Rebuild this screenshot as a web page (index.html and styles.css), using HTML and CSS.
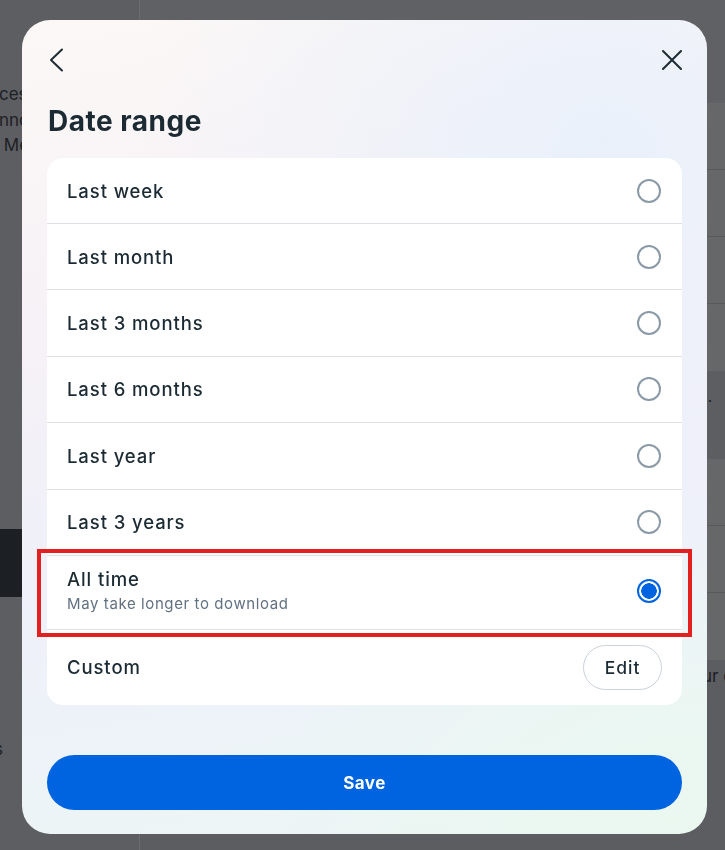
FILE: index.html
```html
<!DOCTYPE html>
<html lang="en">
<head>
<meta charset="utf-8">
<title>Date range</title>
<link rel="stylesheet" href="styles.css">
</head>
<body>
<div class="page">
  <nav class="sidebar">
    <div class="side-text">
      <p class="side-line">ces</p>
      <p class="side-line">nnc</p>
      <p class="side-line">&nbsp;Me</p>
    </div>
    <div class="side-active"></div>
    <p class="side-tail">s</p>
  </nav>
  <main class="main">
    <div class="topbar"></div>
    <div class="list">
      <div class="list-row"></div>
      <div class="list-row"></div>
      <div class="list-row"></div>
      <div class="list-row last"></div>
    </div>
    <div class="notice"><span>s.</span></div>
    <div class="list">
      <div class="list-row"></div>
      <div class="list-row"></div>
      <div class="list-row last"></div>
    </div>
    <div class="footer-note"><span>ur c</span></div>
  </main>
</div>

<div class="modal" role="dialog" aria-label="Date range">
  <div class="modal-head">
    <button class="icon-btn" aria-label="Back">
      <svg width="24" height="24" viewBox="0 0 24 24"><path d="M15 1.5 L4 12 L15 22.5" fill="none" stroke="#1c2b33" stroke-width="2" stroke-linecap="round" stroke-linejoin="round"/></svg>
    </button>
    <button class="icon-btn" aria-label="Close">
      <svg width="24" height="24" viewBox="0 0 24 24"><path d="M5 3 L23 21 M23 3 L5 21" fill="none" stroke="#1c2b33" stroke-width="2" stroke-linecap="round"/></svg>
    </button>
  </div>
  <h1 class="title">Date range</h1>
  <div class="card">
    <div class="row"><span class="label">Last week</span><span class="radio"></span></div>
    <div class="row"><span class="label">Last month</span><span class="radio"></span></div>
    <div class="row"><span class="label">Last 3 months</span><span class="radio"></span></div>
    <div class="row"><span class="label">Last 6 months</span><span class="radio"></span></div>
    <div class="row"><span class="label">Last year</span><span class="radio"></span></div>
    <div class="row"><span class="label">Last 3 years</span><span class="radio"></span></div>
    <div class="row row-two">
      <span class="label-group">
        <span class="label">All time</span>
        <span class="sub">May take longer to download</span>
      </span>
      <span class="radio checked"></span>
      <span class="highlight"></span>
    </div>
    <div class="row row-custom"><span class="label">Custom</span><button class="edit-btn">Edit</button></div>
  </div>
  <button class="save-btn">Save</button>
</div>
</body>
</html>
```

FILE: styles.css
```css
* { box-sizing: border-box; }

html, body {
  margin: 0;
  padding: 0;
}

body {
  font-family: Inter, "Noto Sans", "Liberation Sans", sans-serif;
  background: #5c5e62;
  overflow: hidden;
}

p { margin: 0; }

/* ---------- background page ---------- */
.page {
  display: flex;
  height: 850px;
  width: 725px;
  background: #5c5e62;
}

.sidebar {
  width: 140px;
  border-right: 1px solid #6a6c70;
  display: flex;
  flex-direction: column;
  overflow: hidden;
}

.side-text {
  padding-top: 82px;
  width: 22px;
  overflow: hidden;
}

.side-line {
  font-size: 17px;
  line-height: 25.5px;
  color: #1e2024;
  white-space: nowrap;
  margin-left: -1px;
}

.side-active {
  margin-top: 370px;
  height: 68px;
  width: 22px;
  background: #1c1f23;
}

.side-tail {
  margin-top: 142px;
  margin-left: -6px;
  font-size: 17px;
  line-height: 20px;
  color: #1e2024;
}

.main {
  flex: 1;
  display: flex;
  flex-direction: column;
  overflow: hidden;
}

.topbar {
  height: 103px;
  background: #5f6165;
  flex: none;
}

.list {
  background: #666769;
  flex: none;
}

.list-row {
  height: 67px;
  border-bottom: 1px solid #58595b;
}

.list-row.last {
  border-bottom: none;
}

.notice {
  height: 88px;
  background: #5c5e61;
  display: flex;
  justify-content: flex-end;
  padding: 16px 13px 0 0;
  font-size: 15px;
  color: #1e2024;
  white-space: nowrap;
  overflow: hidden;
  flex: none;
}

.footer-note {
  flex: 1;
  background: #5b5d61;
  display: flex;
  justify-content: flex-end;
  padding-top: 6px;
  margin-right: -8px;
  font-size: 17px;
  color: #1e2024;
  white-space: nowrap;
  overflow: hidden;
}

/* ---------- modal ---------- */
.modal {
  position: fixed;
  left: 22px;
  top: 20px;
  width: 685px;
  height: 814px;
  border-radius: 28px;
  padding: 28px 25px 24px;
  display: flex;
  flex-direction: column;
  background:
    radial-gradient(ellipse 70% 45% at 85% 15%, rgba(232, 240, 251, 0.9), rgba(232, 240, 251, 0) 100%),
    radial-gradient(ellipse 60% 35% at 95% 98%, rgba(234, 248, 240, 1), rgba(234, 248, 240, 0) 100%),
    linear-gradient(170deg, #fcf8f6 0%, #f7f2f6 30%, #eff0f9 60%, #edf3f8 80%, #ecf6f3 100%);
  color: #1c2b33;
}

.modal-head {
  display: flex;
  justify-content: space-between;
  height: 24px;
}

.icon-btn {
  width: 24px;
  height: 24px;
  padding: 0;
  border: none;
  background: none;
  display: block;
}

.icon-btn svg { display: block; }

.title {
  margin: 32px 0 0 1px;
  font-size: 28px;
  line-height: 34px;
  font-weight: 700;
  color: #1c2b33;
  letter-spacing: 0.5px;
}

.card {
  margin-top: 20px;
  background: #ffffff;
  border-radius: 16px;
}

.row {
  position: relative;
  display: flex;
  align-items: center;
  justify-content: space-between;
  min-height: 66.4px;
  padding: 0 20px;
  border-top: 1px solid #dde1e5;
}

.row:first-child {
  border-top: none;
  min-height: 65px;
}

.label {
  font-size: 18.5px;
  line-height: 22px;
  font-weight: 500;
  color: #1c2b33;
  letter-spacing: 0.9px;
}

.label-group {
  display: flex;
  flex-direction: column;
  gap: 4px;
}

.sub {
  font-size: 15px;
  line-height: 20px;
  color: #627181;
  letter-spacing: 0.6px;
}

.row-two {
  min-height: 74px;
  padding-top: 11px;
  padding-bottom: 14px;
}

.row-custom {
  min-height: 76px;
}

.radio {
  width: 24px;
  height: 24px;
  border-radius: 50%;
  border: 2px solid #8b9aa7;
  flex: none;
  margin-right: 1px;
}

.radio.checked {
  border-color: #0064e0;
  background: radial-gradient(circle, #0064e0 0, #0064e0 7.5px, #ffffff 8px);
}

.highlight {
  position: absolute;
  top: -7px;
  left: -10px;
  right: -10px;
  bottom: -8px;
  border: 4px solid #e41f1f;
  pointer-events: none;
}

.edit-btn {
  width: 79px;
  height: 45px;
  border-radius: 23px;
  border: 1px solid #cbd2d9;
  background: #ffffff;
  font-family: inherit;
  font-size: 17.5px;
  font-weight: 500;
  letter-spacing: 1px;
  color: #1c2b33;
  padding: 0;
}

.save-btn {
  margin-top: auto;
  height: 55px;
  width: 100%;
  border: none;
  border-radius: 28px;
  background: #0064e0;
  color: #ffffff;
  font-family: inherit;
  font-size: 17px;
  font-weight: 700;
  letter-spacing: 0.5px;
}
```
